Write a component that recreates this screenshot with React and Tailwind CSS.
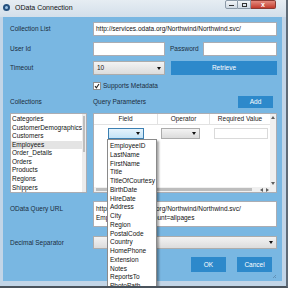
import React from "react";

const Tri = ({ className = "" }) => (
  <svg width="4" height="3" viewBox="0 0 4 3" className={className}>
    <path d="M0 0 H4 L2 3 Z" fill="#111" />
  </svg>
);

const fields = [
  "EmployeeID",
  "LastName",
  "FirstName",
  "Title",
  "TitleOfCourtesy",
  "BirthDate",
  "HireDate",
  "Address",
  "City",
  "Region",
  "PostalCode",
  "Country",
  "HomePhone",
  "Extension",
  "Notes",
  "ReportsTo",
  "PhotoPath",
];

const collections = [
  "Categories",
  "CustomerDemographics",
  "Customers",
  "Employees",
  "Order_Details",
  "Orders",
  "Products",
  "Regions",
  "Shippers",
];

export default function App() {
  return (
    <div className="w-[288px] h-[288px] overflow-hidden relative bg-[#c2d5e7] font-['Liberation_Sans',Arial,sans-serif] text-[6.5px] text-[#1b2d3d] border-r-2 border-b-2 border-r-[#5f6b77] border-b-[#4a535c]">
      {/* Title bar */}
      <div className="h-[17px] flex items-start bg-gradient-to-b from-[#e6edf3] to-[#d3dfea]">
        <div className="mt-[4px] ml-[3px] w-[7px] h-[7px] rounded-full bg-[#24507e] flex items-center justify-center">
          <div className="w-[3px] h-[3px] rounded-full bg-[#9cc4e8]" />
        </div>
        <div className="ml-[5px] mt-[3px] text-[7px] text-[#111] leading-[9px]">OData Connection</div>
        <div className="ml-auto mr-[10px] flex items-start">
          <div className="w-[13px] h-[9px] border border-[#8c9aa8] rounded-l-[2px] bg-gradient-to-b from-[#f2f5f8] to-[#cfd9e3] flex items-end justify-center pb-[2px]">
            <div className="w-[5px] h-[1px] bg-[#333]" />
          </div>
          <div className="w-[13px] h-[9px] border border-l-0 border-[#8c9aa8] bg-gradient-to-b from-[#f2f5f8] to-[#cfd9e3] flex items-center justify-center">
            <div className="w-[5px] h-[4px] border border-[#333]" />
          </div>
          <div className="w-[25px] h-[9px] border border-l-0 border-[#8a3a32] rounded-r-[2px] bg-gradient-to-b from-[#e48a7e] to-[#c2392c] flex items-center justify-center text-white text-[7px] leading-[7px] font-bold">
            x
          </div>
        </div>
      </div>

      {/* Content */}
      <div className="ml-[3px] w-[279px] h-[264px] bg-[#79b7e2] pl-[7px] pr-[5px] flex flex-col">
        {/* Row 1 */}
        <div className="mt-[5px] h-[14px] flex items-center">
          <div className="w-[83px]">Collection List</div>
          <div className="flex-1 h-full bg-white border border-[#abadb3] flex items-center pl-[2px] text-[#111]">
            http://services.odata.org/Northwind/Northwind.svc/
          </div>
        </div>
        {/* Row 2 */}
        <div className="mt-[6px] h-[14px] flex items-center">
          <div className="w-[83px]">User Id</div>
          <div className="w-[72px] h-full bg-white border border-[#abadb3]" />
          <div className="ml-[5px] w-[33px]">Password</div>
          <div className="flex-1 h-full bg-white border border-[#abadb3]" />
        </div>
        {/* Row 3 */}
        <div className="mt-[5px] h-[14px] flex items-center">
          <div className="w-[83px]">Timeout</div>
          <div className="w-[72px] h-full border border-[#acacac] bg-gradient-to-b from-[#f3f3f3] to-[#dcdcdc] flex items-center pl-[3px] pr-[3px] text-[#111]">
            <span>10</span>
            <Tri className="ml-auto" />
          </div>
          <div className="ml-[6px] flex-1 h-full bg-[#2d89cb] text-white flex items-center justify-center">
            Retrieve
          </div>
        </div>
        {/* Row 4 */}
        <div className="mt-[6px] h-[10px] flex items-center pl-[83px]">
          <div className="w-[8px] h-[8px] bg-white border border-[#8f8f8f] flex items-center justify-center">
            <svg width="6" height="6" viewBox="0 0 6 6">
              <path d="M1 3.2 L2.4 4.8 L5 1" stroke="#222" strokeWidth="1.1" fill="none" />
            </svg>
          </div>
          <div className="ml-[2px]">Supports Metadata</div>
        </div>
        {/* Row 5 */}
        <div className="mt-[5px] h-[12px] flex items-center">
          <div className="w-[83px]">Collections</div>
          <div>Query Parameters</div>
          <div className="ml-auto mr-[4px] w-[35px] h-full bg-[#2d89cb] text-white flex items-center justify-center">
            Add
          </div>
        </div>
        {/* Row 6 */}
        <div className="mt-[5px] h-[80px] flex">
          <div className="w-[77px] h-full bg-white border border-[#abadb3] flex">
            <div className="flex-1 flex flex-col pt-[1px] text-[#111]">
              {collections.map((c) => (
                <div
                  key={c}
                  className={`h-[8.8px] leading-[8.8px] pl-[1px] whitespace-nowrap overflow-hidden ${
                    c === "Employees" ? "bg-[#e4e4e4]" : ""
                  }`}
                >
                  {c}
                </div>
              ))}
            </div>
            <div className="w-[5px] h-full bg-[#ececec] flex flex-col">
              <div className="mt-[2px] mx-[1px] h-[36px] bg-[#bdbdbd]" />
            </div>
          </div>
          <div className="ml-[6px] flex-1 h-full bg-white border border-[#abadb3] flex flex-col relative">
            <div className="flex-1 flex">
              <div className="flex-1 flex flex-col">
                {/* header */}
                <div className="h-[11px] flex border-b border-[#e2e2e2] text-[#222]">
                  <div className="w-[64px] flex items-center justify-center border-r border-[#e2e2e2]">Field</div>
                  <div className="w-[52px] flex items-center justify-center border-r border-[#e2e2e2]">Operator</div>
                  <div className="flex-1 flex items-center justify-center">Required Value</div>
                </div>
                {/* row */}
                <div className="h-[17px] flex items-center">
                  <div className="w-[64px] h-full flex items-center justify-center relative">
                    <div className="w-[36px] h-[11px] border border-[#3c7fb1] bg-gradient-to-b from-[#e5f3fc] to-[#c4e3f7] flex items-center justify-end pr-[3px]">
                      <Tri />
                    </div>
                    <div className="absolute left-[13px] top-[14px] w-[50px] h-[160px] bg-white border border-[#8a8a8a] shadow-[2px_2px_2px_rgba(0,0,0,0.35)] z-10 pt-[2px] pl-[2px] text-[#111]">
                      {fields.map((f) => (
                        <div key={f} className="h-[8.75px] leading-[8.75px] whitespace-nowrap">
                          {f}
                        </div>
                      ))}
                    </div>
                  </div>
                  <div className="w-[52px] h-full flex items-center pl-[3px]">
                    <div className="w-[39px] h-[11px] border border-[#acacac] bg-gradient-to-b from-[#f3f3f3] to-[#dcdcdc] flex items-center justify-end pr-[3px]">
                      <Tri />
                    </div>
                  </div>
                  <div className="flex-1 h-full flex items-center pl-[4px]">
                    <div className="w-[54px] h-[11px] border border-[#dadada] bg-white" />
                  </div>
                </div>
                <div className="flex-1" />
              </div>
              {/* vertical scrollbar */}
              <div className="w-[6px] bg-[#f0f0f0] flex flex-col items-center justify-between py-[2px]">
                <svg width="4" height="3" viewBox="0 0 4 3"><path d="M0 3 H4 L2 0 Z" fill="#606060" /></svg>
                <svg width="4" height="3" viewBox="0 0 4 3"><path d="M0 0 H4 L2 3 Z" fill="#606060" /></svg>
              </div>
            </div>
            {/* horizontal scrollbar */}
            <div className="h-[5px] bg-[#f0f0f0] flex items-center">
              <div className="ml-[2px] w-[156px] h-[3px] bg-[#bdbdbd]" />
              <svg width="3" height="4" viewBox="0 0 3 4" className="ml-[8px]"><path d="M3 0 V4 L0 2 Z" fill="#606060" /></svg>
              <svg width="3" height="4" viewBox="0 0 3 4" className="ml-[3px]"><path d="M0 0 V4 L3 2 Z" fill="#606060" /></svg>
            </div>
          </div>
        </div>
        {/* Row 7 */}
        <div className="mt-[8px] h-[26px] flex">
          <div className="w-[83px] pt-[3px]">OData Query URL</div>
          <div className="flex-1 h-full bg-white border border-[#abadb3] pl-[2px] pt-[2px] text-[#111] leading-[9px] overflow-hidden">
            <div className="whitespace-nowrap">http://services.odata.org/Northwind/Northwind.svc/</div>
            <div className="whitespace-nowrap">Employees?$inlinecount=allpages</div>
          </div>
        </div>
        {/* Row 8 */}
        <div className="mt-[9px] h-[13px] flex items-center">
          <div className="w-[83px]">Decimal Separator</div>
          <div className="flex-1 h-full border border-[#acacac] bg-gradient-to-b from-[#f3f3f3] to-[#dcdcdc] flex items-center justify-end pr-[3px]">
            <Tri />
          </div>
        </div>
        {/* Row 9 */}
        <div className="mt-[8px] h-[15px] flex justify-end pr-[5px] gap-[11px]">
          <div className="w-[35px] h-full bg-[#2d89cb] text-white flex items-center justify-center">OK</div>
          <div className="w-[35px] h-full bg-[#2d89cb] text-white flex items-center justify-center">Cancel</div>
        </div>
        <div className="flex-1 flex justify-end items-end pb-[2px] pr-[0px]">
          <svg width="5" height="5" viewBox="0 0 5 5">
            <path d="M4 1 L1 4 M4 3 L3 4" stroke="#5a89ad" strokeWidth="0.8" />
          </svg>
        </div>
      </div>
    </div>
  );
}
